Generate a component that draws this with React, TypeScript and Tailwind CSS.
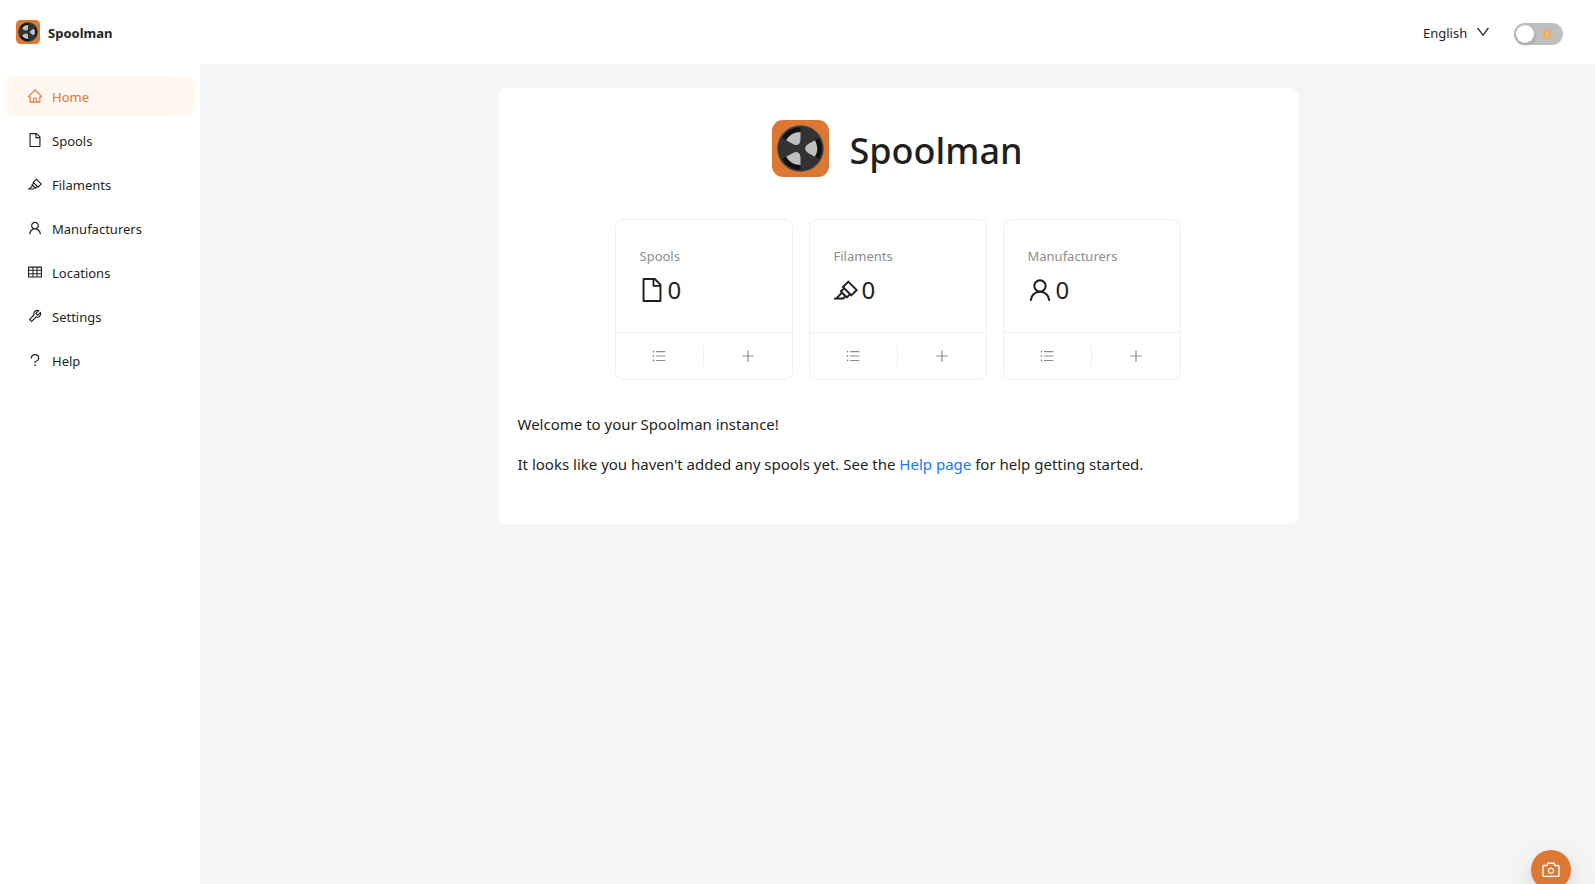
import { useState } from "react";
import type { IconType } from "react-icons";
import {
  AiOutlineCamera,
  AiOutlineDown,
  AiOutlineFile,
  AiOutlineHighlight,
  AiOutlineHome,
  AiOutlinePlus,
  AiOutlineQuestion,
  AiOutlineTable,
  AiOutlineTool,
  AiOutlineUnorderedList,
  AiOutlineUser,
} from "react-icons/ai";

// Ant Design glyphs are drawn inside a 64-unit margin; trim it so sizes are true.
const TRIMMED = "64 64 896 896";

function Glyph({ icon: Icon, className }: { icon: IconType; className: string }) {
  return <Icon viewBox={TRIMMED} aria-hidden="true" className={className} />;
}

function Logo({ className }: { className: string }) {
  return (
    <svg viewBox="-28.5 -28.5 57 57" className={className} aria-hidden="true">
      <rect x="-28.5" y="-28.5" width="57" height="57" rx="11" fill="#dc7734" />
      <circle r="23.3" fill="#4a4a4a" />
      <circle r="22.4" fill="#333333" />
      {[0, 120, 240].map((angle) => (
        <g key={angle} transform={`rotate(${angle})`}>
          <path d="M14 -8.1L18.4 -10.6A21.2 21.2 0 0 1 18.4 10.6L14 8.1Z" fill="#111111" />
          <path
            d="M14.4 -8.3A16.6 16.6 0 0 1 14.4 8.3L7.6 4.4Q4.6 2.6 4.6 0Q4.6 -2.6 7.6 -4.4Z"
            fill="#bfbfbf"
          />
        </g>
      ))}
    </svg>
  );
}

function Sun() {
  return (
    <svg viewBox="-6 -6 12 12" className="size-3" aria-hidden="true">
      <circle r="2.6" fill="#f9c25c" stroke="#f2a33c" strokeWidth="1" />
      {[0, 45, 90, 135, 180, 225, 270, 315].map((angle) => (
        <path
          key={angle}
          d="M0 -4.2V-5.6"
          transform={`rotate(${angle})`}
          stroke="#f5a742"
          strokeWidth="1.5"
          strokeLinecap="round"
        />
      ))}
    </svg>
  );
}

const menu: { label: string; icon: IconType; active?: boolean }[] = [
  { label: "Home", icon: AiOutlineHome, active: true },
  { label: "Spools", icon: AiOutlineFile },
  { label: "Filaments", icon: AiOutlineHighlight },
  { label: "Manufacturers", icon: AiOutlineUser },
  { label: "Locations", icon: AiOutlineTable },
  { label: "Settings", icon: AiOutlineTool },
  { label: "Help", icon: AiOutlineQuestion },
];

const stats: { label: string; icon: IconType; value: number }[] = [
  { label: "Spools", icon: AiOutlineFile, value: 0 },
  { label: "Filaments", icon: AiOutlineHighlight, value: 0 },
  { label: "Manufacturers", icon: AiOutlineUser, value: 0 },
];

function StatCard({ label, icon, value }: { label: string; icon: IconType; value: number }) {
  return (
    <section className="flex flex-col rounded-lg border border-[#f0f0f0]">
      <div className="p-6">
        <h2 className="mb-1 text-[13px] leading-6 text-[#8c8c8c]">{label}</h2>
        <div className="flex h-9 items-center gap-1 text-2xl">
          <Glyph icon={icon} className="size-6" />
          <span>{value}</span>
        </div>
      </div>
      <div className="grid h-[47px] grid-cols-2 items-center border-t border-[#f0f0f0] text-[#8c8c8c]">
        <button
          type="button"
          aria-label={`List ${label}`}
          className="flex h-[22px] items-center justify-center border-r border-[#f0f0f0]"
        >
          <Glyph icon={AiOutlineUnorderedList} className="size-3.5" />
        </button>
        <button type="button" aria-label={`Add ${label}`} className="flex h-[22px] items-center justify-center">
          <Glyph icon={AiOutlinePlus} className="size-3.5" />
        </button>
      </div>
    </section>
  );
}

export default function App() {
  const [dark, setDark] = useState(false);

  return (
    <div className="flex min-h-screen flex-col bg-[#f5f5f5] font-['Noto_Sans','Open_Sans',sans-serif] text-[13px] leading-5 text-[#1f1f1f]">
      <header className="flex h-16 items-center justify-between bg-white pr-8 pl-4">
        <a href="#" className="flex items-center gap-2 font-bold">
          <Logo className="size-6" />
          <span className="pt-0.5">Spoolman</span>
        </a>
        <div className="flex items-center gap-6">
          <div className="relative flex items-center">
            <select aria-label="Language" className="appearance-none bg-transparent pt-0.5 pr-[22px] outline-none">
              <option>English</option>
            </select>
            <Glyph icon={AiOutlineDown} className="pointer-events-none absolute right-0 size-3.5" />
          </div>
          <label className="flex cursor-pointer pt-1">
            <input
              type="checkbox"
              role="switch"
              aria-label="Dark mode"
              checked={dark}
              onChange={(e) => setDark(e.target.checked)}
              className="peer sr-only"
            />
            <span className="flex h-[22px] w-[49px] items-center justify-between rounded-full bg-[#bfbfbf] pr-2.5 pl-0.5 peer-checked:flex-row-reverse">
              <span className="size-[18px] rounded-full bg-white shadow-[0_2px_4px_rgba(0,35,11,0.2)]" />
              <Sun />
            </span>
          </label>
        </div>
      </header>

      <div className="flex flex-1">
        <nav aria-label="Main" className="w-[200px] shrink-0 bg-white px-1 pt-3 pr-[5px]">
          <ul className="flex flex-col gap-1">
            {menu.map(({ label, icon, active }) => (
              <li key={label}>
                <a
                  href="#"
                  aria-current={active ? "page" : undefined}
                  className={
                    active
                      ? "flex h-10 items-center gap-2.5 rounded-lg bg-[#fff7f0] px-6 text-[#dc7734]"
                      : "flex h-10 items-center gap-2.5 rounded-lg px-6"
                  }
                >
                  <Glyph icon={icon} className="size-3.5" />
                  <span className="pt-0.5">{label}</span>
                </a>
              </li>
            ))}
          </ul>
        </nav>

        <main className="flex-1 p-6">
          <div className="mx-auto max-w-[800px] rounded-lg bg-white px-5 pt-8 pb-12">
            <div className="flex h-[57px] items-center justify-center gap-5">
              <Logo className="size-[57px]" />
              <h1 className="pt-1 text-4xl leading-[53px] font-medium">Spoolman</h1>
            </div>
            <div className="mx-auto mt-[42px] grid max-w-[566px] grid-cols-3 gap-4">
              {stats.map((stat) => (
                <StatCard key={stat.label} {...stat} />
              ))}
            </div>
            <div className="mt-8 flex flex-col gap-4 text-[15px] leading-6">
              <p>Welcome to your Spoolman instance!</p>
              <p>
                It looks like you haven't added any spools yet. See the{" "}
                <a href="#" className="text-[#1677ff]">
                  Help page
                </a>{" "}
                for help getting started.
              </p>
            </div>
          </div>
        </main>
      </div>

      <button
        type="button"
        aria-label="Scan QR code"
        className="fixed right-6 -bottom-1.5 flex size-10 items-center justify-center rounded-full bg-[#dc7734] text-white shadow-[0_6px_16px_rgba(0,0,0,0.08),0_3px_6px_-4px_rgba(0,0,0,0.12),0_9px_28px_8px_rgba(0,0,0,0.05)]"
      >
        <Glyph icon={AiOutlineCamera} className="size-[18px]" />
      </button>
    </div>
  );
}
